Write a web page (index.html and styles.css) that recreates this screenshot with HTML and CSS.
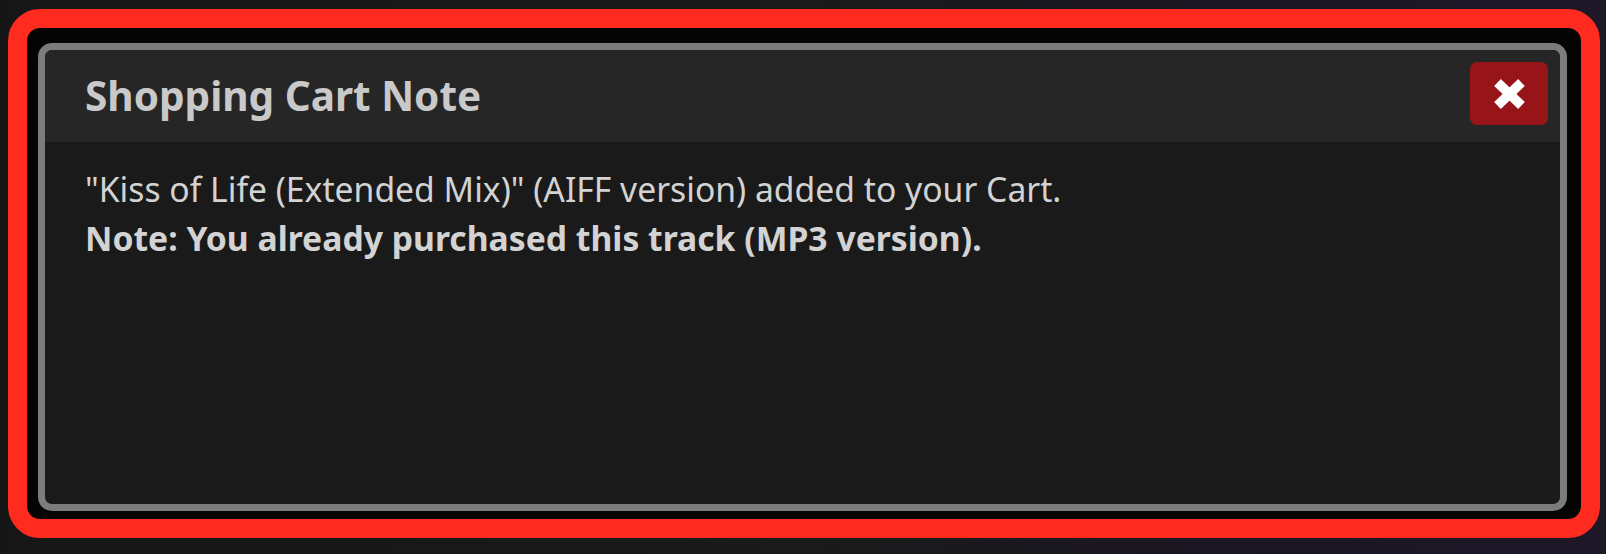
FILE: index.html
```html
<!DOCTYPE html>
<html lang="en">
<head>
<meta charset="UTF-8">
<title>Shopping Cart Note</title>
<link rel="stylesheet" href="styles.css">
</head>
<body>

<div class="highlight">
    <div class="modal">
        <div class="modal-header">
            <h2 class="modal-title">Shopping Cart Note</h2>
            <button type="button" class="close-btn" aria-label="Close">
                <svg width="31" height="30" viewBox="0 0 31 30">
                    <line x1="3.5" y1="3.5" x2="27.5" y2="26.5" stroke="#fff" stroke-width="9.5"/>
                    <line x1="27.5" y1="3.5" x2="3.5" y2="26.5" stroke="#fff" stroke-width="9.5"/>
                </svg>
            </button>
        </div>
        <div class="modal-body">
            <p class="msg">"Kiss of Life (Extended Mix)" (AIFF version) added to your Cart.</p>
            <p class="msg note">Note: You already purchased this track (MP3 version).</p>
        </div>
    </div>
</div>

</body>
</html>
```

FILE: styles.css
```css
html, body {
    height: 100%;
}
body {
    margin: 0;
    font-family: "Noto Sans", "Open Sans", sans-serif;
    background: linear-gradient(90deg, #161616 0%, #1a1a1a 50%, #1b1624 80%, #1d1728 100%);
    box-sizing: border-box;
    padding: 9px 6px 16px 8px;
}
.highlight {
    height: 100%;
    box-sizing: border-box;
    border: 19px solid #ff2b1f;
    border-radius: 32px;
    background-color: #050505;
    padding: 15px 14px 8px 11px;
}
.modal {
    height: 100%;
    box-sizing: border-box;
    border: 7px solid #7c7c7c;
    border-radius: 14px;
    overflow: hidden;
    display: flex;
    flex-direction: column;
    background-color: #1a1a1a;
}
.modal-header {
    height: 92px;
    flex: none;
    background-color: #262626;
    display: flex;
    align-items: center;
    justify-content: space-between;
    padding: 0 12px 5px 40px;
    box-sizing: border-box;
}
.modal-title {
    margin: 4px 0 0;
    font-size: 40.5px;
    font-weight: bold;
    color: #c9c9c9;
}
.close-btn {
    width: 78px;
    height: 63px;
    border: none;
    border-radius: 7px;
    background-color: #971519;
    display: flex;
    align-items: center;
    justify-content: center;
    padding: 0;
    cursor: pointer;
}
.modal-body {
    flex: 1;
    padding: 23px 40px 0 40px;
}
.msg {
    margin: 0;
    font-size: 33.7px;
    line-height: 49px;
    color: #d3d3d3;
}
.note {
    font-weight: bold;
}
```
